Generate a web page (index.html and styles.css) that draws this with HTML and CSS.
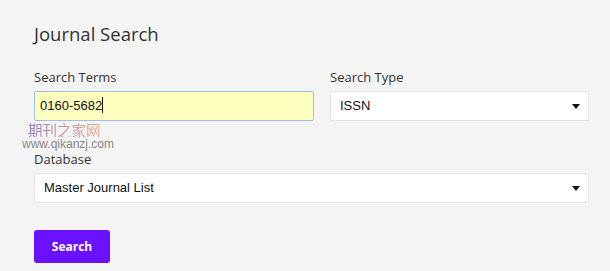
FILE: index.html
```html
<!DOCTYPE html>
<html lang="en">
<head>
    <meta charset="UTF-8">
    <title>Journal Search</title>
    <link rel="stylesheet" href="styles.css">
</head>
<body>
    <div class="panel">
        <h1>Journal Search</h1>

        <div class="row">
            <div class="field terms">
                <label>Search Terms</label>
                <div class="input">0160-5682<span class="caret"></span></div>
            </div>
            <div class="field type">
                <label>Search Type</label>
                <div class="select">ISSN<span class="arrow"></span></div>
            </div>
        </div>

        <div class="field db">
            <label>Database</label>
            <div class="select">Master Journal List<span class="arrow"></span></div>
        </div>

        <button class="btn">Search</button>
    </div>

    <div class="watermark">
        <div class="wm-cn">期刊之家网</div>
        <div class="wm-url">www.qikanzj.com</div>
    </div>
</body>
</html>
```

FILE: styles.css
```css
body, html {
    margin: 0;
    padding: 0;
    background: #f4f4f4;
    font-family: 'Open Sans', sans-serif;
    color: #333;
}

.panel {
    padding: 21px 21px 0 34px;
}

h1 {
    margin: 0 0 21px 0;
    font-size: 18.5px;
    font-weight: 400;
    line-height: 26px;
    color: #333;
}

.row {
    display: flex;
    gap: 16px;
}

.field label {
    display: block;
    font-size: 13px;
    line-height: 18px;
    margin-bottom: 5px;
    color: #333;
}

.terms {
    width: 280px;
}

.type {
    width: 259px;
}

.input, .select {
    position: relative;
    box-sizing: border-box;
    height: 30px;
    line-height: 28px;
    font-family: 'Liberation Sans', Arial, sans-serif;
    font-size: 13px;
    color: #111;
}

.input {
    background: #fdffbf;
    border: 1px solid #a3bde9;
    border-radius: 2px;
    padding-left: 5px;
}

.caret {
    display: inline-block;
    width: 1px;
    height: 16px;
    background: #111;
    vertical-align: -3px;
}

.select {
    background: white;
    border: 1px solid #e6e6e6;
    padding-left: 9px;
}

.arrow {
    position: absolute;
    right: 8px;
    top: 12px;
    border-left: 4px solid transparent;
    border-right: 4px solid transparent;
    border-top: 5px solid #111;
}

.db {
    margin-top: 29px;
    width: 555px;
}

.db label {
    line-height: 14px;
    padding-top: 2px;
    margin-bottom: 7px;
}

.btn {
    margin-top: 27px;
    width: 76px;
    height: 33px;
    border: none;
    border-radius: 3px;
    background: #6a11fd;
    color: white;
    font-family: 'Open Sans', sans-serif;
    font-size: 12px;
    font-weight: 700;
}

/* filigrane du site */
.watermark {
    position: absolute;
    left: 22px;
    top: 122px;
    pointer-events: none;
}

.wm-cn {
    font-family: 'Noto Sans CJK SC', sans-serif;
    font-size: 14.5px;
    line-height: 15px;
    background: linear-gradient(90deg, #8a63b8, #c98a8a, #e6a57a);
    -webkit-background-clip: text;
    color: transparent;
    opacity: 0.85;
    margin-left: 6px;
}

.wm-url {
    font-family: 'Liberation Sans', Arial, sans-serif;
    font-size: 12px;
    line-height: 11px;
    margin-top: 2px;
    color: #888;
}
```
